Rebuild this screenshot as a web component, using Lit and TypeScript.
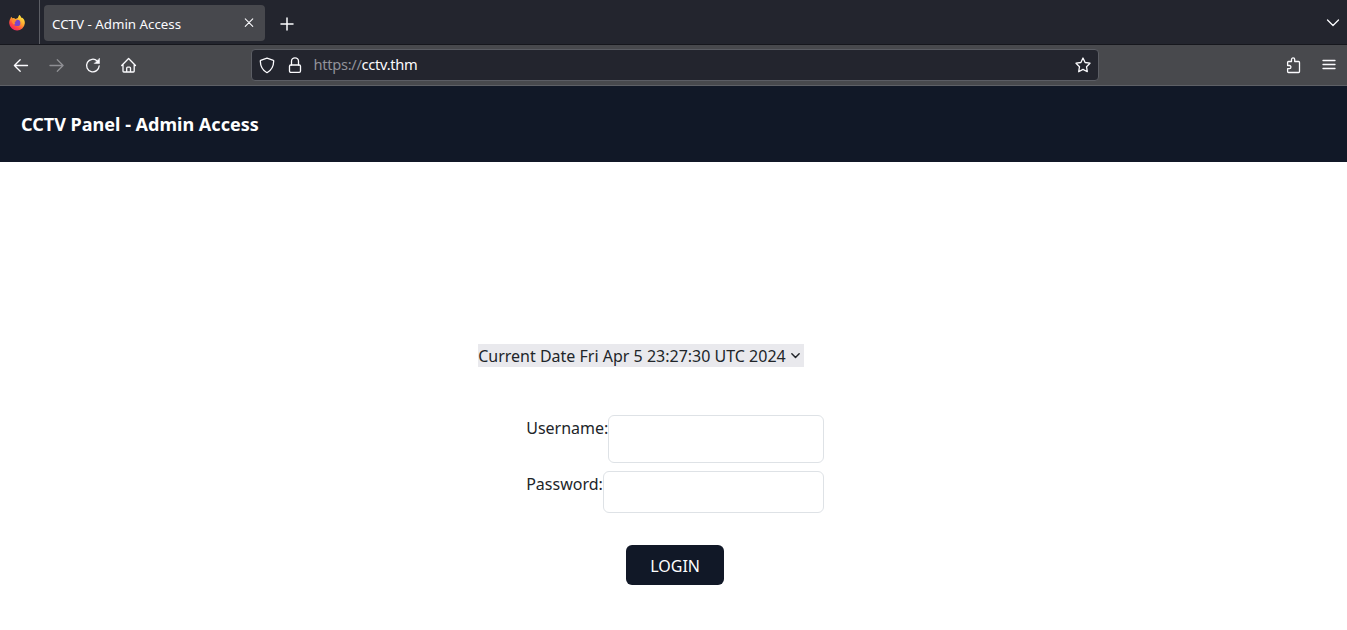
import { LitElement, html, css, svg } from "lit";
import { customElement } from "lit/decorators.js";

const icon = (body: unknown, cls = "") =>
  html`<svg class="icon ${cls}" viewBox="0 0 16 16">${body}</svg>`;

const back = svg`<path d="M14.500 8.500H1.400M7.200 2.800 1.400 8.500l5.800 5.700"/>`;
const forward = svg`<path d="M1 8.500h13.100M8.300 2.800l5.800 5.700-5.800 5.700"/>`;
const reload = svg`<path d="M14.200 8.800A6.300 6.300 0 1 1 12.200 3.900"/><path class="solid" d="M14.500 1.500v5H9.500z"/>`;
const home = svg`<path d="M.7 8.500 7.600 1.500l6.900 7M2 7.300v6.900q0 .8.800.8h9.600q.8 0 .8-.8V7.300M5.700 15v-4q0-.9.900-.9h2q.9 0 .9.900v4"/>`;
const shield = svg`<path d="M8 1.200 14.400 3.400q.3 0 .3.500C14.600 9.500 12.300 13.300 8 15.700 3.700 13.300 1.400 9.500 1.300 3.900q0-.4.300-.5z"/>`;
const lock = svg`<rect x="2.500" y="8" width="11" height="7.300" rx="1.300"/><path d="M4.500 8V4.300a3.500 3.500 0 0 1 7 0V8"/>`;
const star = svg`<path d="m8 1 2.100 4.500 4.900.700-3.500 3.500.8 5L8 12.400l-4.300 2.300.8-5L1 6.200l4.900-.7z"/>`;
const puzzle = svg`<path d="M1.600 5.400q0-.9.900-.9h3V2.500a1.600 1.600 0 0 1 3.200 0v2h3.900q.9 0 .9.900v9.200q0 .9-.9.900H2.500q-.9 0-.9-.9v-3h1.800a1.500 1.500 0 0 0 0-3.100H1.600z"/>`;
const menu = svg`<path d="M2 3.500h12M2 7.500h12M2 11.500h12"/>`;

@customElement("app-root")
export class AppRoot extends LitElement {
  static styles = css`
    :host { display: flex; flex-direction: column; width: 100%; height: 100vh; overflow: hidden; background: #fff; color: #212529; font: 16px/24px "Noto Sans", sans-serif; }
    * { box-sizing: border-box; }
    .icon { display: block; flex: none; width: 16px; height: 16px; fill: none; stroke: #fbfbfe; stroke-width: 1.3; stroke-linecap: round; stroke-linejoin: round; overflow: visible; }
    .solid { fill: #fbfbfe; stroke-width: .5; }
    .dim { opacity: .4; }
    .tabs { display: flex; flex: none; height: 44px; background: #23252e; color: #fbfbfe; padding-right: 6px; }
    .brand { width: 40px; padding: 15px 0 0 9px; border-right: 1px solid #5c5e65; }
    .fox { display: block; width: 16px; height: 16px; overflow: visible; }
    .tab { display: flex; align-items: center; justify-content: space-between; width: 221px; height: 36px; margin: 5px 0 0 4px; padding: 0 11px 0 8px; background: #47484d; border-radius: 4px; font-size: 13.333px; line-height: 18px; }
    .title { padding-top: 1px; }
    .close { width: 10px; height: 10px; stroke-width: 1.7; }
    .plus { width: 12px; height: 12px; margin: 17.500px 0 0 15.500px; stroke-width: 2; }
    .chevron { width: 16px; height: 16px; margin: 15px 0 0 auto; stroke-width: 1.3; }
    .toolbar { display: flex; align-items: center; flex: none; height: 42px; padding: 0 10px 0 13px; background: #48494d; border-top: 1px solid #16171d; border-bottom: 1px solid #5e6066; }
    .nav { display: flex; gap: 20px; width: 238px; }
    .url { display: flex; align-items: center; width: 848px; height: 32px; padding: 0 7px; background: #23252e; border: 1px solid #5b5d64; border-radius: 4px; }
    .url .lock { margin-left: 12px; }
    .address { margin: -2px auto 0 10.500px; font-size: 14.667px; letter-spacing: -.3px; line-height: 20px; color: #919299; }
    .host { color: #fbfbfe; }
    .tools { display: flex; gap: 19px; margin-left: auto; }
    .header { flex: none; height: 76px; padding: 24px 21px; background: #111827; color: #fff; font-weight: 700; font-size: 18.050px; line-height: 28px; }
    .page { display: flex; flex-direction: column; align-items: flex-start; }
    .date { display: flex; align-items: center; justify-content: space-between; width: 326px; height: 23px; margin: 182px 0 0 478px; padding: 0 4.500px 0 .2px; background: #e9e9ed; white-space: nowrap; }
    .caret { width: 9px; height: 9px; stroke: #212529; stroke-width: 2.600; }
    .form { display: flex; flex-direction: column; width: 297.800px; margin: 48px 0 0 526.200px; }
    .row { display: flex; margin-bottom: 8px; }
    .row label { padding-top: 1px; }
    .field { flex: 1; min-width: 0; height: 48px; padding: 0 12px; border: 1px solid #dee2e6; border-radius: 6px; background: #fff; outline: none; font: inherit; }
    .short { height: 42px; }
    .login { align-self: center; width: 98px; height: 40px; margin: 24px 0 0; padding: 2px 0 0; border: 0; border-radius: 6px; background: #111827; color: #fff; font: inherit; }
  `;

  render() {
    return html`
      <div class="tabs">
        <div class="brand">
          <svg class="fox" viewBox="0 0 16 16">
            <defs>
              <linearGradient id="flame" x1=".85" y1=".05" x2=".2" y2="1">
                <stop offset="0" stop-color="#fff044"/><stop offset=".4" stop-color="#ffa52e"/><stop offset=".7" stop-color="#ff4b3f"/><stop offset="1" stop-color="#f01875"/>
              </linearGradient>
            </defs>
            <path fill="url(#flame)" d="M10.300 0c1.200.7 1.700 1.800 2 2.800 1-.1 1.500.4 2.300 1.300 1 1.300 1.400 2.900 1.200 4.500A7.800 7.800 0 0 1 .3 8.700C0 6.800.5 4.800 1.600 3.200L2.200 1.700l1.200 1.500L5 2.900l1.500 1.200L8.800 3C9.400 2 9.500.8 10.300 0z"/>
            <circle cx="8.200" cy="7.900" r="3.200" fill="#7b45cc"/>
            <path fill="#ff8a32" d="M2.700 5 6 4.700l1.800 1-1.700 1.100-.5 1.200.8 1-1.600.6C3.500 8.800 2.900 7 2.700 5z"/>
          </svg>
        </div>
        <div class="tab">
          <span class="title">CCTV - Admin Access</span>
          ${icon(svg`<path d="m2 1.500 12 12M14 1.500l-12 12"/>`, "close")}
        </div>
        ${icon(svg`<path d="M8 0v16M0 8h16"/>`, "plus")}
        ${icon(svg`<path d="m2.500 5 5.500 5.500L13.500 5"/>`, "chevron")}
      </div>
      <div class="toolbar">
        <div class="nav">${icon(back)}${icon(forward, "dim")}${icon(reload)}${icon(home)}</div>
        <div class="url">
          ${icon(shield)}${icon(lock, "lock")}
          <span class="address">https://<span class="host">cctv.thm</span></span>
          ${icon(star)}
        </div>
        <div class="tools">${icon(puzzle)}${icon(menu)}</div>
      </div>
      <div class="header">CCTV Panel - Admin Access</div>
      <div class="page">
        <div class="date"><span>Current Date Fri Apr 5 23:27:30 UTC 2024</span>${icon(svg`<path d="m1.500 5 6.500 6.500L14.500 5"/>`, "caret")}</div>
        <div class="form">
          <div class="row"><label for="user">Username:</label><input id="user" class="field" type="text"></div>
          <div class="row"><label for="pass">Password:</label><input id="pass" class="field short" type="password"></div>
          <button class="login">LOGIN</button>
        </div>
      </div>
    `;
  }
}
